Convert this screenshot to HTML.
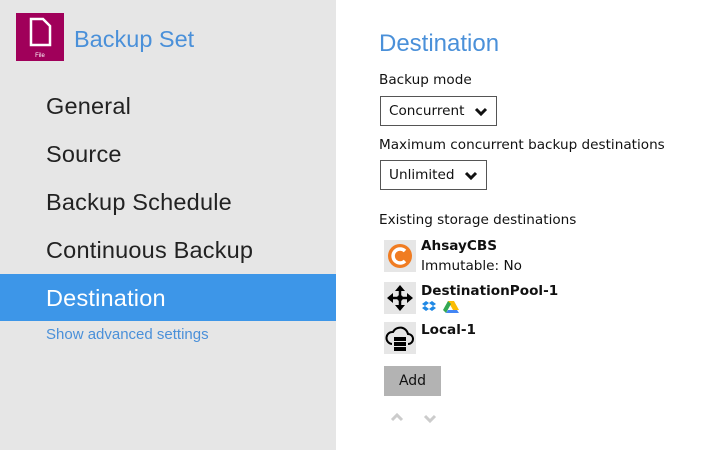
<!DOCTYPE html>
<html><head><meta charset="utf-8"><style>
*{margin:0;padding:0;box-sizing:border-box}
body{width:720px;height:450px;overflow:hidden;font-family:"DejaVu Sans","Liberation Sans",sans-serif;background:#fff;position:relative}
.side{position:absolute;left:0;top:0;width:336px;height:450px;background:#e6e6e6}
.a{position:absolute;white-space:nowrap}
.m{left:46px;color:#222;font-family:"Liberation Sans",sans-serif;font-size:23.5px;letter-spacing:0.2px}
.sel{position:absolute;border:1.5px solid #555;background:#fff;font-size:13.6px;padding:6px 0 0 8px;color:#111}
.ic{position:absolute;left:384px;width:32px;height:32px;background:#e6e6e6}
.t{font-size:13.6px;color:#111}
</style></head><body>
<div class="side"></div>
<div class="a" style="left:16px;top:13px;width:48px;height:48px;background:#a0005a">
<svg width="48" height="48"><path d="M15 6h12l7 7v19H15z" fill="none" stroke="#fff" stroke-width="2.5"/><text x="24" y="44" font-size="6" fill="#fff" text-anchor="middle" font-family="Liberation Sans">File</text></svg></div>
<div class="a" style="left:74px;top:26px;font-size:23.5px;color:#4a90d9;font-family:'Liberation Sans',sans-serif">Backup Set</div>
<div class="a m" style="top:93px">General</div>
<div class="a m" style="top:141px">Source</div>
<div class="a m" style="top:189px">Backup Schedule</div>
<div class="a m" style="top:237px">Continuous Backup</div>
<div class="a" style="left:0;top:274px;width:336px;height:47px;background:#3d96e8"></div>
<div class="a m" style="top:285px;color:#fff">Destination</div>
<div class="a" style="left:46px;top:326px;font-size:15px;color:#4a90d9;font-family:'Liberation Sans',sans-serif">Show advanced settings</div>

<div class="a" style="left:379px;top:30px;font-size:24px;color:#4a90d9;font-family:'Liberation Sans',sans-serif">Destination</div>
<div class="a t" style="left:379px;top:72px">Backup mode</div>
<div class="sel" style="left:380px;top:96px;width:117px;height:30px">Concurrent<svg style="position:absolute;right:8px;top:10px" width="14" height="10"><path d="M2 2l5 5 5-5" stroke="#111" stroke-width="3" fill="none"/></svg></div>
<div class="a t" style="left:379px;top:137px">Maximum concurrent backup destinations</div>
<div class="sel" style="left:380px;top:160px;width:107px;height:30px">Unlimited<svg style="position:absolute;right:8px;top:10px" width="14" height="10"><path d="M2 2l5 5 5-5" stroke="#111" stroke-width="3" fill="none"/></svg></div>
<div class="a t" style="left:379px;top:212px">Existing storage destinations</div>

<div class="ic" style="top:240px"><svg width="32" height="32"><circle cx="16" cy="16" r="12" fill="#f07c22"/><path d="M21 11a7 7 0 1 0 0 10" stroke="#fff" stroke-width="3.5" fill="none"/></svg></div>
<div class="a t" style="left:421px;top:238px;font-weight:bold">AhsayCBS</div>
<div class="a t" style="left:421px;top:258px">Immutable: No</div>

<div class="ic" style="top:282px"><svg width="32" height="32"><path d="M16 3l-5 6h10zM16 29l-5-6h10zM3 16l6-5v10zM29 16l-6-5v10z" fill="#000"/><path d="M16 8v16M8 16h16" stroke="#000" stroke-width="2.5"/><circle cx="16" cy="16" r="3" fill="#000"/></svg></div>
<div class="a t" style="left:421px;top:283px;font-weight:bold">DestinationPool-1</div>
<svg class="a" style="left:421px;top:300px" width="40" height="14"><path d="M1 4l4-3 3 2-4 3zM15 4l-4-3-3 2 4 3zM1 8l4 3 3-2-4-3zM15 8l-4 3-3-2 4-3z" fill="#1e88e5"/><path d="M27 1h6l5 9h-6z" fill="#fbbc04"/><path d="M27 1l-5 9 3 3 5-9z" fill="#34a853"/><path d="M25 13h13l-2-3H27z" fill="#4285f4"/></svg>

<div class="ic" style="top:322px"><svg width="32" height="32"><path d="M8 22a6 6 0 0 1 1-12 8 8 0 0 1 15 2 5 5 0 0 1 0 10" stroke="#000" stroke-width="2" fill="none"/><rect x="10" y="15" width="12" height="4" fill="#000"/><rect x="10" y="20" width="12" height="4" fill="#000"/><rect x="10" y="25" width="12" height="4" fill="#000"/></svg></div>
<div class="a t" style="left:421px;top:322px;font-weight:bold">Local-1</div>

<div class="a" style="left:384px;top:366px;width:57px;height:30px;background:#b3b3b3;font-size:14px;color:#111;text-align:center;line-height:30px">Add</div>
<svg class="a" style="left:390px;top:412px" width="50" height="12"><path d="M2 8l5-5 5 5" stroke="#ccc" stroke-width="3" fill="none"/><path d="M35 4l5 5 5-5" stroke="#ccc" stroke-width="3" fill="none"/></svg>
</body></html>
